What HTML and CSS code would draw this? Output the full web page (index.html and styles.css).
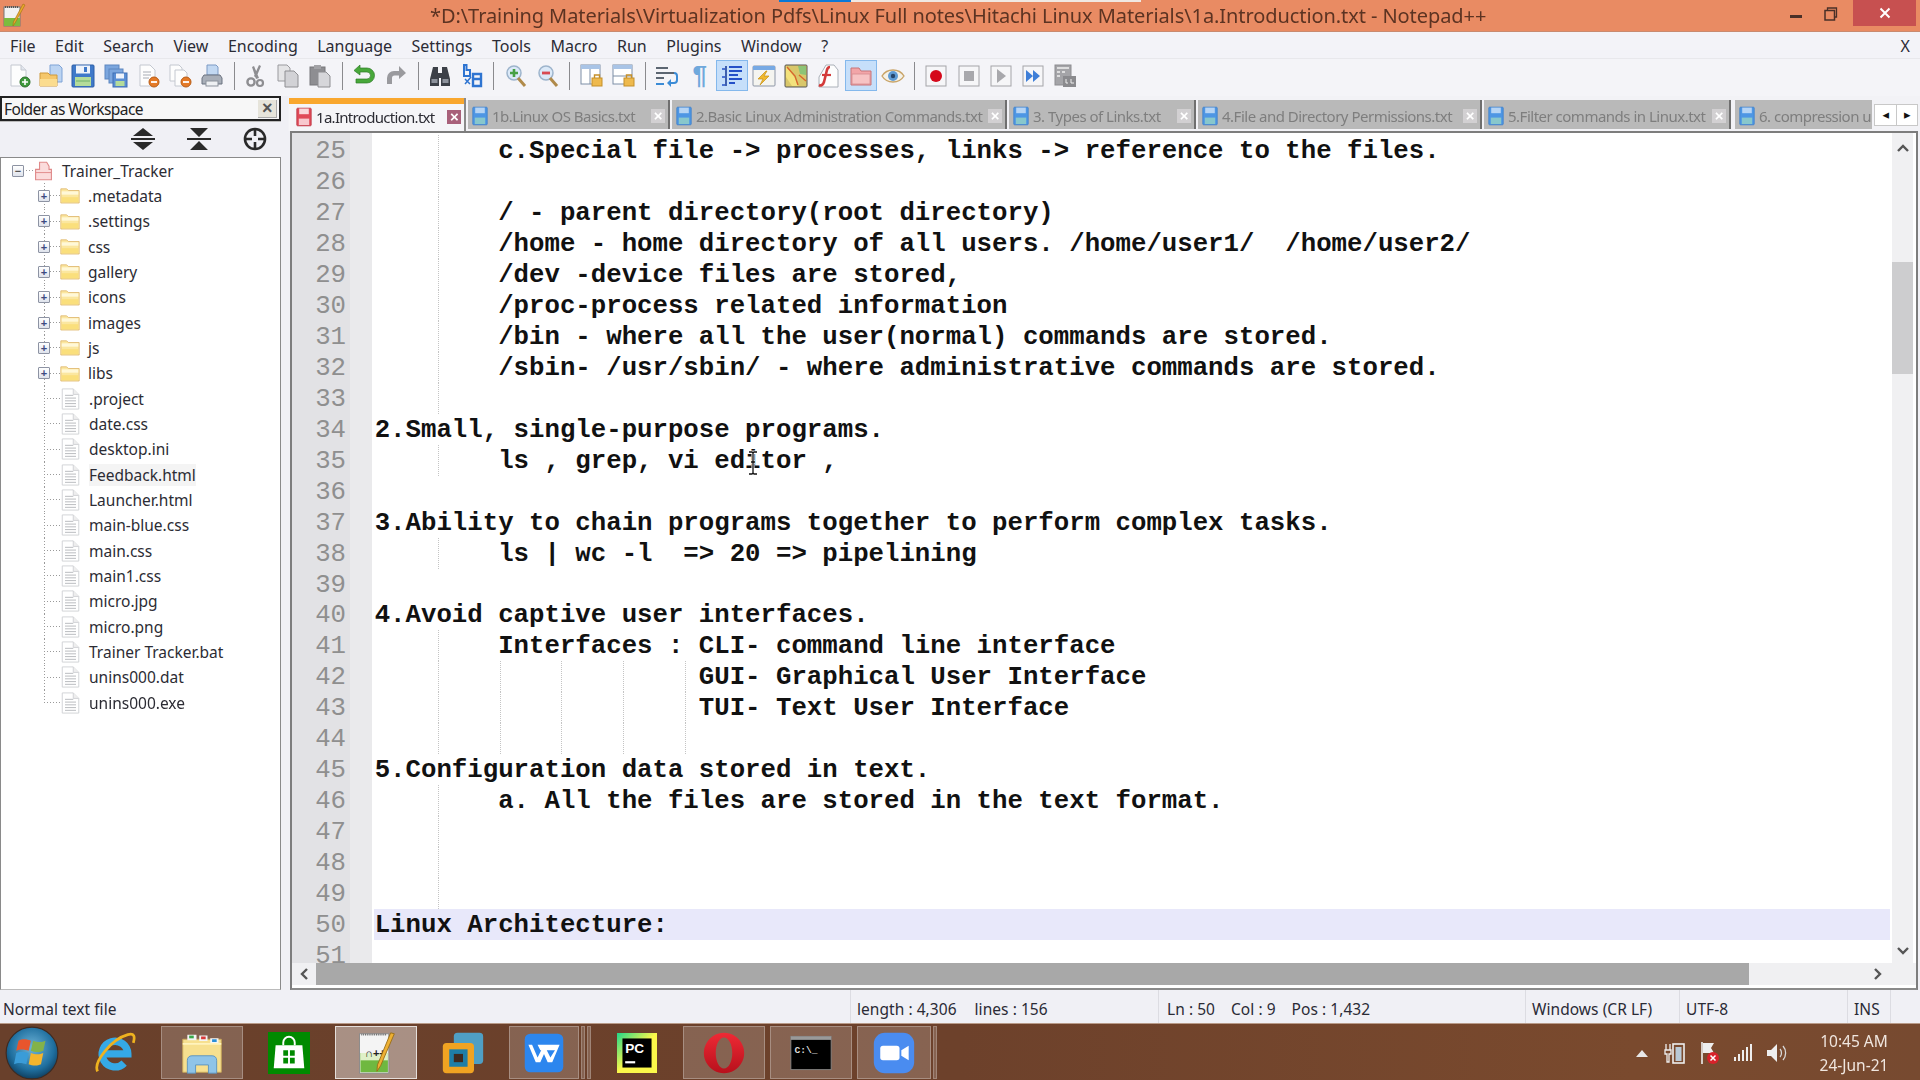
FILE: index.html
```html
<!DOCTYPE html>
<html lang="en">
<head>
<meta charset="UTF-8">
<title>Notepad++</title>
<link rel="stylesheet" href="styles.css">
</head>
<body>
<svg class="sprite" width="0" height="0">
  <!-- toolbar -->
  <symbol id="i-new" viewBox="0 0 24 24"><path d="M4 1h10l5 5v16H4z" fill="#fdfdfd" stroke="#c4c8d0"/><path d="M14 1v5h5" fill="#e2e6ee" stroke="#c4c8d0"/><circle cx="18" cy="18" r="5" fill="#3f9a3c" stroke="#2c6e2a"/><path d="M15 18h6M18 15v6" stroke="#fff" stroke-width="1.6"/></symbol>
  <symbol id="i-open" viewBox="0 0 24 24"><path d="M11 1h9l3 3v14H11z" fill="#bcd4f2" stroke="#7fa3d6"/><path d="M1 9h8l2 2h7v11H1z" fill="#f5c76b" stroke="#cf9a3c"/><path d="M1 15h17v7H1z" fill="#fbdc8f"/></symbol>
  <symbol id="i-save" viewBox="0 0 24 24"><rect x="1" y="1" width="22" height="22" rx="1" fill="#3f79c9" stroke="#2d5ea6"/><rect x="5" y="1.5" width="14" height="8" fill="#eef3fb"/><rect x="13" y="3" width="3" height="5" fill="#3f79c9"/><rect x="4" y="13" width="16" height="9" fill="#b4dc9a"/><path d="M5 17h14" stroke="#6fb06a"/></symbol>
  <symbol id="i-saveall" viewBox="0 0 24 24"><rect x="1" y="1" width="14" height="14" fill="#7ba6de" stroke="#5c86c0"/><rect x="5" y="5" width="14" height="14" fill="#7ba6de" stroke="#5c86c0"/><rect x="9" y="9" width="14" height="14" fill="#5a8ed4" stroke="#3f6fb3"/><rect x="12" y="9.5" width="8" height="5" fill="#eef3fb"/><rect x="11.5" y="17" width="9" height="5" fill="#b4dc9a"/></symbol>
  <symbol id="i-close" viewBox="0 0 24 24"><path d="M4 1h10l5 5v16H4z" fill="#fdfdfd" stroke="#c4c8d0"/><path d="M7 8h8M7 11h8M7 14h6" stroke="#a8acb4"/><circle cx="18" cy="18" r="5" fill="#e57a27" stroke="#b85c16"/><path d="M15 18h6" stroke="#fff" stroke-width="1.8"/></symbol>
  <symbol id="i-closeall" viewBox="0 0 24 24"><path d="M2 1h9l3 3v13H2z" fill="#fdfdfd" stroke="#c4c8d0"/><path d="M7 6h9l3 3v13H7z" fill="#fdfdfd" stroke="#c4c8d0"/><circle cx="18" cy="18" r="5" fill="#e57a27" stroke="#b85c16"/><path d="M15 18h6" stroke="#fff" stroke-width="1.8"/></symbol>
  <symbol id="i-print" viewBox="0 0 24 24"><path d="M7 1h9l2 2v8H7z" fill="#c2d8f2" stroke="#7c9ac4"/><path d="M4 11h16l2 3v6H2v-6z" fill="#a8aeb8" stroke="#6b7280"/><rect x="6" y="17" width="12" height="5" fill="#eef0f3" stroke="#8b919b"/></symbol>
  <symbol id="i-cut" viewBox="0 0 24 24"><path d="M15 1l2 1-5 12-2-2zM8 3l2-1 5 12-3 1z" fill="#8e8e92"/><circle cx="7" cy="18" r="3.6" fill="none" stroke="#8e8e92" stroke-width="2.4"/><circle cx="16" cy="19" r="3" fill="none" stroke="#8e8e92" stroke-width="2.2"/></symbol>
  <symbol id="i-copy" viewBox="0 0 24 24"><path d="M2 1h9l3 3v13H2z" fill="#e4e4e6" stroke="#9a9a9e"/><path d="M9 7h9l4 4v12H9z" fill="#d2d2d6" stroke="#8e8e92"/></symbol>
  <symbol id="i-paste" viewBox="0 0 24 24"><rect x="2" y="3" width="15" height="18" fill="#8e8e92" stroke="#77777b"/><rect x="6" y="1" width="7" height="4" fill="#a2a2a6"/><path d="M10 8h8l4 4v11H10z" fill="#d6d6da" stroke="#8e8e92"/></symbol>
  <symbol id="i-undo" viewBox="0 0 24 24"><path d="M8 4h7a7.5 7.5 0 0 1 0 15H4v-4h11a3.5 3.5 0 0 0 0-7H8v3L2 6.500 8 1z" fill="#48a83a" stroke="#2f7d2a" stroke-width=".7"/></symbol>
  <symbol id="i-redo" viewBox="0 0 24 24"><path d="M15 7H10a7 7 0 0 0-7 7v6h5v-6a2.500 2.500 0 0 1 2.500-2.500H15V15l7-6-7-7z" fill="#9a9a9e"/></symbol>
  <symbol id="i-find" viewBox="0 0 24 24"><path d="M5 3h5v6h4V3h5l3 12v7h-9v-8h-2v8H2v-7z" fill="#3c4048"/><rect x="3.500" y="15" width="6" height="4" fill="#8d929c"/><rect x="14.500" y="15" width="6" height="4" fill="#8d929c"/></symbol>
  <symbol id="i-replace" viewBox="0 0 24 24"><path d="M4 1h2.500v5H10v6H4z" fill="none" stroke="#2e74d1" stroke-width="2"/><path d="M13 10h8v5h-8zM13 15h8v7h-8z" fill="none" stroke="#2e74d1" stroke-width="2.400"/><path d="M5 15l5 5M11 13l-6 7" stroke="#2e74d1" stroke-width="1.500"/></symbol>
  <symbol id="i-zoomin" viewBox="0 0 24 24"><circle cx="10" cy="9" r="7" fill="#dbe9f8" stroke="#9db4cc" stroke-width="1.500"/><path d="M14 14l7 8" stroke="#b08a4a" stroke-width="3"/><path d="M6 9h8M10 5v8" stroke="#46a044" stroke-width="2.600"/></symbol>
  <symbol id="i-zoomout" viewBox="0 0 24 24"><circle cx="10" cy="9" r="7" fill="#dbe9f8" stroke="#9db4cc" stroke-width="1.500"/><path d="M14 14l7 8" stroke="#b08a4a" stroke-width="3"/><path d="M6 9h8" stroke="#d84a52" stroke-width="2.800"/></symbol>
  <symbol id="i-syncv" viewBox="0 0 24 24"><rect x="1" y="1" width="19" height="19" fill="#fff" stroke="#7c8ea6"/><path d="M1 1h19v4H1z" fill="#a9c4e6"/><path d="M10 5v15" stroke="#7c8ea6"/><rect x="12" y="14" width="10" height="8" fill="#eeb94d" stroke="#c48f2a"/><path d="M14.500 14v-3h5v3" fill="none" stroke="#c48f2a" stroke-width="1.400"/></symbol>
  <symbol id="i-synch" viewBox="0 0 24 24"><rect x="1" y="1" width="19" height="19" fill="#fff" stroke="#7c8ea6"/><path d="M1 1h19v4H1z" fill="#a9c4e6"/><path d="M1 12h19" stroke="#7c8ea6"/><rect x="12" y="14" width="10" height="8" fill="#eeb94d" stroke="#c48f2a"/><path d="M14.500 14v-3h5v3" fill="none" stroke="#c48f2a" stroke-width="1.400"/></symbol>
  <symbol id="i-wrap" viewBox="0 0 24 24"><path d="M1 4h12M1 9h18M1 14h8M1 20h8" stroke="#5c6672" stroke-width="2"/><path d="M19 9a3 3 0 0 1 3 3v4a3 3 0 0 1-3 3h-5" fill="none" stroke="#3b8bd6" stroke-width="2"/><path d="M16 15l-4 4 4 4z" fill="#3b8bd6"/><path d="M1 20h8" stroke="#3b8bd6" stroke-width="2"/></symbol>
  <symbol id="i-guide" viewBox="0 0 24 24"><path d="M6 2v20" stroke="#1d3f9c" stroke-width="1.600"/><path d="M9 3h13M9 7h13M9 11h9M9 15h13M9 19h6" stroke="#2450c8" stroke-width="2"/><path d="M2 5h3M2 13h3M2 21h3" stroke="#2450c8" stroke-width="1.500"/></symbol>
  <symbol id="i-udl" viewBox="0 0 24 24"><rect x="1" y="2" width="22" height="20" rx="1" fill="#f4f4f0" stroke="#8d96a6"/><path d="M1 2h22v4H1z" fill="#77a9e4"/><path d="M14 7L6 15h5l-3 6 9-9h-5l3-5z" fill="#f0b92e" stroke="#c68f13" stroke-width=".7"/></symbol>
  <symbol id="i-map" viewBox="0 0 24 24"><rect x="1" y="1" width="22" height="22" rx="1" fill="#d9c76a" stroke="#555"/><path d="M2 2l9 12 3 8h-6L2 13z" fill="#f3e27c"/><path d="M14 2h8v9l-6-1z" fill="#8dc476"/><path d="M3 3l8 9 3 9M15 11l7 6" stroke="#d8662c" stroke-width="1.400" fill="none"/></symbol>
  <symbol id="i-func" viewBox="0 0 24 24"><path d="M10 1h8l4 5v17H3V13z" fill="#fdfdfd" stroke="#aab0b8"/><path d="M14 3c-3 0-3 3-4 7l-2 8c-1 3-3 4-5 3" fill="none" stroke="#d33a3a" stroke-width="2.600"/><path d="M6 11h9" stroke="#d33a3a" stroke-width="2.200"/></symbol>
  <symbol id="i-folder" viewBox="0 0 24 24"><path d="M2 4h8l2 3h10v14H2z" fill="#f2a5a8" stroke="#c77478"/><path d="M3 10h18v10H3z" fill="#f7c3c4" stroke="#d58c8f" stroke-width=".8"/></symbol>
  <symbol id="i-eye" viewBox="0 0 24 24"><path d="M1 12c5-8 17-8 22 0-5 8-17 8-22 0z" fill="#f4f1e8" stroke="#c9a468" stroke-width="1.400"/><circle cx="12" cy="12" r="5" fill="#5f9bd4"/><circle cx="12" cy="12" r="2.200" fill="#25456b"/></symbol>
  <symbol id="i-rec" viewBox="0 0 24 24"><rect x="2" y="2" width="20" height="20" fill="#f6f6f8" stroke="#a4a4a8"/><circle cx="12" cy="12" r="6" fill="#d5091b"/></symbol>
  <symbol id="i-stop" viewBox="0 0 24 24"><rect x="2" y="2" width="20" height="20" fill="#f6f6f8" stroke="#a4a4a8"/><rect x="7" y="7" width="10" height="10" fill="#a8a8ac"/></symbol>
  <symbol id="i-play" viewBox="0 0 24 24"><rect x="2" y="2" width="20" height="20" fill="#f6f6f8" stroke="#a4a4a8"/><path d="M8 5l9 7-9 7z" fill="#a8a8ac"/></symbol>
  <symbol id="i-ff" viewBox="0 0 24 24"><rect x="2" y="2" width="20" height="20" fill="#f6f6f8" stroke="#a4a4a8"/><path d="M5 6l7 6-7 6zM12 6l7 6-7 6z" fill="#3f7fd8"/></symbol>
  <symbol id="i-savemacro" viewBox="0 0 24 24"><rect x="2" y="1" width="16" height="20" fill="#a4a4a8" stroke="#8c8c90"/><path d="M4 4h12M4 8h3M9 8h3M4 12h3" stroke="#f0f0f0" stroke-width="1.500"/><rect x="10" y="12" width="13" height="11" fill="#8a8a8e"/><path d="M13 15v4h2M18 15v4h3" stroke="#eee" fill="none"/></symbol>
  <!-- tabs -->
  <symbol id="i-tabred" viewBox="0 0 20 24"><rect x="1" y="1" width="18" height="22" rx="1" fill="#e04a58" stroke="#bb3644"/><rect x="4" y="1.500" width="12" height="7" fill="#f9d8dc"/><rect x="3.500" y="14" width="13" height="8" fill="#f8c8ce"/></symbol>
  <symbol id="i-tabblue" viewBox="0 0 20 24"><rect x="1" y="1" width="18" height="22" rx="1" fill="#4e96e4" stroke="#3b7fcb"/><rect x="4" y="1.500" width="12" height="7" fill="#b6d4f4"/><rect x="3.500" y="14" width="13" height="8" fill="#88c7cc"/></symbol>
  <!-- tree -->
  <symbol id="i-treefolder" viewBox="0 0 24 20"><path d="M1 2h7l2 2h13v15H1z" fill="#fbe7a0" stroke="#dfb76c"/><path d="M2 5h20v4H2z" fill="#fff8d8"/><path d="M2 12h20v6H2z" fill="#fadf7c"/></symbol>
  <symbol id="i-treefile" viewBox="0 0 20 24"><path d="M1 1h12l6 6v16H1z" fill="#fff" stroke="#cfd1d4"/><path d="M13 1v6h6" fill="#eee" stroke="#cfd1d4"/><path d="M4 8h9M4 11h12M4 14h12M4 17h12M4 20h12" stroke="#b4b6ba"/></symbol>
  <symbol id="i-treeroot" viewBox="0 0 24 24"><path d="M7 1h9l3 5v4h3v13H2V10h5z" fill="#fbdcdc" stroke="#e08a8a" stroke-width="1.400"/><path d="M2 14h20" stroke="#e08a8a" stroke-width="1.200"/></symbol>
</svg>

<header class="titlebar">
  <div class="progress"><span class="progress-done"></span></div>
  <svg class="app-icon" viewBox="0 0 24 24"><rect x="2" y="3" width="16" height="19" fill="#f2f2f2" stroke="#777"/><path d="M2 14h16v8H2z" fill="#7cbb3e"/><path d="M3 3h14" stroke="#555" stroke-width="2" stroke-dasharray="1 1"/><path d="M23 1L13 19l-2 3 .4-4L21 0z" fill="#e8a92c" stroke="#a06e12" stroke-width=".6"/></svg>
  <div class="title-text">*D:\Training Materials\Virtualization Pdfs\Linux Full notes\Hitachi Linux Materials\1a.Introduction.txt - Notepad++</div>
  <div class="win-btns">
    <span class="win-min"></span>
    <svg class="win-restore" viewBox="0 0 14 14"><path d="M3.500 3V1h9v9h-2" fill="none" stroke="#4a3028" stroke-width="1.300"/><rect x="1" y="3.500" width="9.500" height="9.500" fill="none" stroke="#4a3028" stroke-width="1.500"/></svg>
    <div class="win-close"><svg viewBox="0 0 12 12"><path d="M1.500 1.500l9 9M10.500 1.500l-9 9" stroke="#fff" stroke-width="2"/></svg></div>
  </div>
</header>

<nav class="menubar">
  <span>File</span><span>Edit</span><span>Search</span><span>View</span><span>Encoding</span><span>Language</span><span>Settings</span><span>Tools</span><span>Macro</span><span>Run</span><span>Plugins</span><span>Window</span><span>?</span>
  <span class="menu-x">X</span>
</nav>

<div class="toolbar">
  <div class="tb"><svg><use href="#i-new"/></svg></div>
  <div class="tb"><svg><use href="#i-open"/></svg></div>
  <div class="tb"><svg><use href="#i-save"/></svg></div>
  <div class="tb"><svg><use href="#i-saveall"/></svg></div>
  <div class="tb"><svg><use href="#i-close"/></svg></div>
  <div class="tb"><svg><use href="#i-closeall"/></svg></div>
  <div class="tb"><svg><use href="#i-print"/></svg></div>
  <i class="tb-sep"></i>
  <div class="tb"><svg><use href="#i-cut"/></svg></div>
  <div class="tb"><svg><use href="#i-copy"/></svg></div>
  <div class="tb"><svg><use href="#i-paste"/></svg></div>
  <i class="tb-sep"></i>
  <div class="tb"><svg><use href="#i-undo"/></svg></div>
  <div class="tb"><svg><use href="#i-redo"/></svg></div>
  <i class="tb-sep"></i>
  <div class="tb"><svg><use href="#i-find"/></svg></div>
  <div class="tb"><svg><use href="#i-replace"/></svg></div>
  <i class="tb-sep"></i>
  <div class="tb"><svg><use href="#i-zoomin"/></svg></div>
  <div class="tb"><svg><use href="#i-zoomout"/></svg></div>
  <i class="tb-sep"></i>
  <div class="tb"><svg><use href="#i-syncv"/></svg></div>
  <div class="tb"><svg><use href="#i-synch"/></svg></div>
  <i class="tb-sep"></i>
  <div class="tb"><svg><use href="#i-wrap"/></svg></div>
  <div class="tb tb-pilcrow">¶</div>
  <div class="tb tb-on"><svg><use href="#i-guide"/></svg></div>
  <div class="tb"><svg><use href="#i-udl"/></svg></div>
  <div class="tb"><svg><use href="#i-map"/></svg></div>
  <div class="tb"><svg><use href="#i-func"/></svg></div>
  <div class="tb tb-on"><svg><use href="#i-folder"/></svg></div>
  <div class="tb"><svg><use href="#i-eye"/></svg></div>
  <i class="tb-sep"></i>
  <div class="tb"><svg><use href="#i-rec"/></svg></div>
  <div class="tb"><svg><use href="#i-stop"/></svg></div>
  <div class="tb"><svg><use href="#i-play"/></svg></div>
  <div class="tb"><svg><use href="#i-ff"/></svg></div>
  <div class="tb"><svg><use href="#i-savemacro"/></svg></div>
</div>

<div class="workarea">
  <aside class="panel">
    <div class="panel-head">
      <span>Folder as Workspace</span>
      <span class="panel-x">×</span>
    </div>
    <div class="panel-tools">
      <svg viewBox="0 0 24 24"><path d="M12 1l10 8H2zM12 23L2 15h20z" fill="#2a2a2a"/><path d="M0 12h24" stroke="#2a2a2a" stroke-width="2"/></svg>
      <svg viewBox="0 0 24 24"><path d="M3 1h18L12 10zM12 14l9 9H3z" fill="#2a2a2a"/><path d="M0 12h24" stroke="#2a2a2a" stroke-width="2"/></svg>
      <svg viewBox="0 0 24 24"><circle cx="12" cy="12" r="10" fill="none" stroke="#2a2a2a" stroke-width="2.600"/><path d="M12 2v7M12 15v7M2 12h7M15 12h7" stroke="#2a2a2a" stroke-width="2.600"/></svg>
    </div>
    <ul class="tree">
      <li class="row root"><b class="exp">−</b><svg class="ic-root"><use href="#i-treeroot"/></svg>Trainer_Tracker</li>
      <li class="row dir"><b class="exp">+</b><svg class="ic-dir"><use href="#i-treefolder"/></svg>.metadata</li>
      <li class="row dir"><b class="exp">+</b><svg class="ic-dir"><use href="#i-treefolder"/></svg>.settings</li>
      <li class="row dir"><b class="exp">+</b><svg class="ic-dir"><use href="#i-treefolder"/></svg>css</li>
      <li class="row dir"><b class="exp">+</b><svg class="ic-dir"><use href="#i-treefolder"/></svg>gallery</li>
      <li class="row dir"><b class="exp">+</b><svg class="ic-dir"><use href="#i-treefolder"/></svg>icons</li>
      <li class="row dir"><b class="exp">+</b><svg class="ic-dir"><use href="#i-treefolder"/></svg>images</li>
      <li class="row dir"><b class="exp">+</b><svg class="ic-dir"><use href="#i-treefolder"/></svg>js</li>
      <li class="row dir"><b class="exp">+</b><svg class="ic-dir"><use href="#i-treefolder"/></svg>libs</li>
      <li class="row file"><svg class="ic-file"><use href="#i-treefile"/></svg>.project</li>
      <li class="row file"><svg class="ic-file"><use href="#i-treefile"/></svg>date.css</li>
      <li class="row file"><svg class="ic-file"><use href="#i-treefile"/></svg>desktop.ini</li>
      <li class="row file"><svg class="ic-file"><use href="#i-treefile"/></svg><span class="hover">Feedback.html</span></li>
      <li class="row file"><svg class="ic-file"><use href="#i-treefile"/></svg>Launcher.html</li>
      <li class="row file"><svg class="ic-file"><use href="#i-treefile"/></svg>main-blue.css</li>
      <li class="row file"><svg class="ic-file"><use href="#i-treefile"/></svg>main.css</li>
      <li class="row file"><svg class="ic-file"><use href="#i-treefile"/></svg>main1.css</li>
      <li class="row file"><svg class="ic-file"><use href="#i-treefile"/></svg>micro.jpg</li>
      <li class="row file"><svg class="ic-file"><use href="#i-treefile"/></svg>micro.png</li>
      <li class="row file"><svg class="ic-file"><use href="#i-treefile"/></svg>Trainer Tracker.bat</li>
      <li class="row file"><svg class="ic-file"><use href="#i-treefile"/></svg>unins000.dat</li>
      <li class="row file last"><svg class="ic-file"><use href="#i-treefile"/></svg>unins000.exe</li>
    </ul>
  </aside>

  <main class="docs">
    <div class="tabbar">
      <div class="tab tab-on t1"><svg><use href="#i-tabred"/></svg><span class="tab-name">1a.Introduction.txt</span><b class="tab-x">×</b></div>
      <div class="tab t2"><svg><use href="#i-tabblue"/></svg><span class="tab-name">1b.Linux OS Basics.txt</span><b class="tab-x">×</b></div>
      <div class="tab t3"><svg><use href="#i-tabblue"/></svg><span class="tab-name">2.Basic Linux Administration Commands.txt</span><b class="tab-x">×</b></div>
      <div class="tab t4"><svg><use href="#i-tabblue"/></svg><span class="tab-name">3. Types of Links.txt</span><b class="tab-x">×</b></div>
      <div class="tab t5"><svg><use href="#i-tabblue"/></svg><span class="tab-name">4.File and Directory Permissions.txt</span><b class="tab-x">×</b></div>
      <div class="tab t6"><svg><use href="#i-tabblue"/></svg><span class="tab-name">5.Filter commands in Linux.txt</span><b class="tab-x">×</b></div>
      <div class="tab t7"><svg><use href="#i-tabblue"/></svg><span class="tab-name">6. compression u</span></div>
      <div class="tab-arrows"><span>◂</span><span>▸</span></div>
    </div>

    <div class="editor">
      <div class="editor-main">
        <div class="view">
          <div class="ln"><span class="num">25</span><span class="txt g1">        c.Special file -&gt; processes, links -&gt; reference to the files.</span></div>
          <div class="ln"><span class="num">26</span><span class="txt g1"></span></div>
          <div class="ln"><span class="num">27</span><span class="txt g1">        / - parent directory(root directory)</span></div>
          <div class="ln"><span class="num">28</span><span class="txt g1">        /home - home directory of all users. /home/user1/  /home/user2/</span></div>
          <div class="ln"><span class="num">29</span><span class="txt g1">        /dev -device files are stored,</span></div>
          <div class="ln"><span class="num">30</span><span class="txt g1">        /proc-process related information</span></div>
          <div class="ln"><span class="num">31</span><span class="txt g1">        /bin - where all the user(normal) commands are stored.</span></div>
          <div class="ln"><span class="num">32</span><span class="txt g1">        /sbin- /usr/sbin/ - where administrative commands are stored.</span></div>
          <div class="ln"><span class="num">33</span><span class="txt g1"></span></div>
          <div class="ln"><span class="num">34</span><span class="txt">2.Small, single-purpose programs.</span></div>
          <div class="ln"><span class="num">35</span><span class="txt g1">        ls , grep, vi editor ,</span></div>
          <div class="ln"><span class="num">36</span><span class="txt"></span></div>
          <div class="ln"><span class="num">37</span><span class="txt">3.Ability to chain programs together to perform complex tasks.</span></div>
          <div class="ln"><span class="num">38</span><span class="txt g1">        ls | wc -l  =&gt; 20 =&gt; pipelining</span></div>
          <div class="ln"><span class="num">39</span><span class="txt"></span></div>
          <div class="ln"><span class="num">40</span><span class="txt">4.Avoid captive user interfaces.</span></div>
          <div class="ln"><span class="num">41</span><span class="txt g1">        Interfaces : CLI- command line interface</span></div>
          <div class="ln"><span class="num">42</span><span class="txt g5">                     GUI- Graphical User Interface</span></div>
          <div class="ln"><span class="num">43</span><span class="txt g5">                     TUI- Text User Interface</span></div>
          <div class="ln"><span class="num">44</span><span class="txt g5"></span></div>
          <div class="ln"><span class="num">45</span><span class="txt">5.Configuration data stored in text.</span></div>
          <div class="ln"><span class="num">46</span><span class="txt g1">        a. All the files are stored in the text format.</span></div>
          <div class="ln"><span class="num">47</span><span class="txt g1"></span></div>
          <div class="ln"><span class="num">48</span><span class="txt g1"></span></div>
          <div class="ln"><span class="num">49</span><span class="txt g1"></span></div>
          <div class="ln"><span class="num">50</span><span class="txt cur">Linux Architecture:</span></div>
          <div class="ln"><span class="num">51</span><span class="txt"></span></div>
          <svg class="ibeam" viewBox="0 0 12 24"><path d="M2 1h3l1 1 1-1h3M6 2v20M2 23h3l1-1 1 1h3M4 11h4" fill="none" stroke="#fff" stroke-width="3"/><path d="M2 1h3l1 1 1-1h3M6 2v20M2 23h3l1-1 1 1h3M4 11h4" fill="none" stroke="#111" stroke-width="1.300"/></svg>
        </div>
        <div class="vscroll">
          <svg viewBox="0 0 12 8"><path d="M1 7l5-5 5 5" fill="none" stroke="#555" stroke-width="2.400"/></svg>
          <div class="vthumb"></div>
          <svg viewBox="0 0 12 8"><path d="M1 1l5 5 5-5" fill="none" stroke="#555" stroke-width="2.400"/></svg>
        </div>
      </div>
      <div class="hscroll">
        <svg viewBox="0 0 8 12"><path d="M7 1L2 6l5 5" fill="none" stroke="#555" stroke-width="2.400"/></svg>
        <div class="hthumb"></div>
        <svg viewBox="0 0 8 12"><path d="M1 1l5 5-5 5" fill="none" stroke="#555" stroke-width="2.400"/></svg>
      </div>
    </div>
  </main>
</div>

<footer class="statusbar">
  <div class="st">Normal text file</div>
  <div class="st st-len"><span>length : 4,306</span><span>lines : 156</span></div>
  <div class="st st-pos"><span>Ln : 50</span><span>Col : 9</span><span>Pos : 1,432</span></div>
  <div class="st">Windows (CR LF)</div>
  <div class="st">UTF-8</div>
  <div class="st">INS</div>
</footer>

<div class="taskbar">
  <div class="task orb">
    <svg viewBox="0 0 48 48"><defs><radialGradient id="orbg" cx=".5" cy=".4" r=".65"><stop offset="0" stop-color="#6fb4d8"/><stop offset=".65" stop-color="#1f6f9f"/><stop offset="1" stop-color="#0b3350"/></radialGradient></defs><circle cx="24" cy="24" r="23" fill="url(#orbg)" stroke="#3d2a22"/><path d="M12 13c4-2 8-1 11 0l-2 9c-3-1-7-2-11 0z" fill="#e8552d"/><path d="M25 13c3 1 7 2 11 0l-2 9c-4 2-8 1-11 0z" fill="#83b24a"/><path d="M10 24c4-2 8-1 11 0l-2 10c-3-1-7-2-11 0z" fill="#3a9cd8"/><path d="M23 24c3 1 7 2 11 0l-2 10c-4 2-8 1-11 0z" fill="#f4b52d"/></svg>
  </div>
  <div class="task">
    <svg viewBox="0 0 48 48"><path d="M10 25h28A14 14 0 1 0 34 35" fill="none" stroke="#35a9e6" stroke-width="8"/><path d="M5 44C0 34 20 9 38 4c7-2 8 2 6 9" fill="none" stroke="#eeb21f" stroke-width="3"/></svg>
  </div>
  <div class="task cell">
    <svg viewBox="0 0 48 48"><path d="M3 9h42v36H3z" fill="#f7e08f" stroke="#c9a85a"/><path d="M8 4h10v6H8zM21 5h9v6h-9zM33 8h9v6h-9z" fill="#f4f4f4"/><path d="M10 5h5v3h-5z" fill="#3aa84a"/><path d="M23 6h5v3h-5z" fill="#d83a3a"/><path d="M35 9h5v3h-5z" fill="#2a8fd8"/><path d="M3 14h42" stroke="#fff3bd" stroke-width="2"/><path d="M8 46V32c0-3 2-5 5-5h22c3 0 5 2 5 5v14h-9v-9H17v9z" fill="#8fc4e8" stroke="#5b93bd"/></svg>
  </div>
  <div class="task">
    <svg class="ic-store" viewBox="0 0 44 44"><rect width="44" height="44" fill="#008a00"/><path d="M8 14h28l2 24H6z" fill="#fff"/><path d="M16 14v-3a6 6 0 0 1 12 0v3" fill="none" stroke="#fff" stroke-width="2"/><path d="M16 19h5v6h-5zM23 19h5v6h-5zM16 27h5v6h-5zM23 27h5v6h-5z" fill="#008a00"/></svg>
  </div>
  <div class="task cell cell-on">
    <svg viewBox="0 0 48 48"><rect x="6" y="3" width="32" height="43" fill="#f4f4f4" stroke="#888"/><path d="M7 24h30v21H7z" fill="#6fb840"/><path d="M7 24h30v8H7z" fill="#dff0c8"/><path d="M8 4h28" stroke="#666" stroke-width="2" stroke-dasharray="1 1"/><text class="npp-t" x="12" y="28">∩++</text><path d="M44 3L29 38l-4 6 .6-7L40 2z" fill="#eeb033" stroke="#9a6e16"/></svg>
  </div>
  <div class="task">
    <svg viewBox="0 0 48 48"><rect x="14" y="2" width="32" height="34" rx="4" fill="#4f9fc4"/><rect x="2" y="13" width="34" height="33" rx="4" fill="#f0a322"/><rect x="9" y="20" width="20" height="19" fill="#1e7ea8"/><rect x="14" y="25" width="10" height="9" fill="#3f2a20"/></svg>
  </div>
  <div class="task cell cell-bars">
    <div class="cell-main"><svg viewBox="0 0 48 48"><rect x="3" y="3" width="42" height="42" rx="6" fill="#2c86ee"/><path d="M7 15l8 19h5l4-9 4 9h5l8-19H17l3 6h16l-5 8-7-14-7 14-6-14z" fill="#fff"/></svg></div>
    <i></i><i></i>
  </div>
  <div class="task">
    <svg class="ic-pc" viewBox="0 0 44 44"><defs><linearGradient id="pcg" x1="0" y1="0" x2="1" y2="1"><stop offset="0" stop-color="#21d789"/><stop offset=".5" stop-color="#fcf84a"/></linearGradient></defs><rect width="44" height="44" fill="url(#pcg)"/><rect x="6" y="6" width="32" height="32" fill="#000"/><text class="pc-t" x="9" y="22">PC</text><rect x="9" y="31" width="11" height="2.400" fill="#fff"/></svg>
  </div>
  <div class="task cell">
    <svg viewBox="0 0 48 48"><defs><linearGradient id="opg" x1="0" y1="0" x2="0" y2="1"><stop offset="0" stop-color="#ee2a35"/><stop offset="1" stop-color="#b8101c"/></linearGradient></defs><path fill-rule="evenodd" d="M24 2a22 22 0 1 0 .01 0zM24 7c-5 0-9 7.500-9 17s4 17 9 17 9-7.500 9-17-4-17-9-17z" fill="url(#opg)"/></svg>
  </div>
  <div class="task cell">
    <svg class="ic-cmd" viewBox="0 0 48 40"><rect x="1" y="1" width="46" height="38" fill="#000" stroke="#888"/><rect x="1" y="1" width="46" height="4" fill="#9a9a9a"/><text class="cmd-t" x="5" y="20">C:\_</text></svg>
  </div>
  <div class="task cell cell-bars zoom-cell">
    <div class="cell-main"><svg viewBox="0 0 48 48"><rect x="2" y="2" width="44" height="44" rx="12" fill="#4a8cf0"/><rect x="9" y="16" width="21" height="16" rx="3" fill="#fff"/><path d="M32 21l8-5v16l-8-5z" fill="#fff"/></svg></div>
    <i></i>
  </div>
  <div class="tray">
    <svg viewBox="0 0 24 24"><path d="M12 9l6 7H6z" fill="#e8e8e8"/></svg>
    <svg viewBox="0 0 24 24"><path d="M3 3v6M7 3v6M2 9h6v4H6v8H4v-8H2z" fill="none" stroke="#eee" stroke-width="1.300"/><rect x="10" y="3" width="11" height="19" fill="none" stroke="#eee" stroke-width="1.600"/><rect x="12.500" y="6" width="6" height="14" fill="#b9c9d6"/></svg>
    <svg viewBox="0 0 24 24"><path d="M5 1v22" stroke="#eee" stroke-width="1.600"/><path d="M6 2h11l-3 5 3 5H6z" fill="#eee"/><circle cx="16" cy="17" r="6" fill="#d8222a"/><path d="M13.500 14.500l5 5M18.500 14.500l-5 5" stroke="#fff" stroke-width="1.500"/></svg>
    <svg viewBox="0 0 24 24"><path d="M3 20h2v-4H3zM7 20h2V13H7zM11 20h2V9h-2zM15 20h2V6h-2zM19 20h2V3h-2z" fill="#eee"/></svg>
    <svg viewBox="0 0 24 24"><path d="M3 9h4l6-6v18l-6-6H3z" fill="#eee"/><path d="M16 8c2 2 2 6 0 8M19 5c3.500 4 3.500 10 0 14" fill="none" stroke="#d8d8d8" stroke-width="1.300"/></svg>
    <div class="clock"><span>10:45 AM</span><span>24-Jun-21</span></div>
  </div>
</div>
</body>
</html>
```

FILE: styles.css
```css
* {
    box-sizing: border-box;
}
html, body {
    margin: 0;
    padding: 0;
}
body {
    width: 1920px;
    height: 1080px;
    overflow: hidden;
    display: flex;
    flex-direction: column;
    font-family: "Noto Sans", "Liberation Sans", sans-serif;
    font-size: 16px;
    color: #222;
    background: #f0f0f5;
    filter: blur(0.45px);
}
.sprite {
    position: absolute;
}

/* title bar */
.titlebar {
    position: relative;
    height: 32px;
    flex: none;
    display: flex;
    align-items: center;
    background: #e98b63;
    border-bottom: 1px solid #c98a70;
}
.progress {
    position: absolute;
    top: 0;
    left: 779px;
    width: 362px;
    height: 2px;
    background: #f0e8e2;
}
.progress-done {
    display: block;
    width: 72px;
    height: 2px;
    background: #0a78d7;
}
.app-icon {
    width: 24px;
    height: 26px;
    margin-left: 2px;
}
.title-text {
    position: absolute;
    left: 430px;
    top: 3px;
    font-size: 20px;
    line-height: 26px;
    white-space: nowrap;
    color: #5c3322;
    letter-spacing: -0.08px;
}
.win-btns {
    margin-left: auto;
    display: flex;
    align-self: flex-start;
    align-items: flex-start;
}
.win-min {
    width: 12px;
    height: 3px;
    margin: 15px 22px 0 0;
    background: #4a3028;
}
.win-restore {
    width: 14px;
    height: 14px;
    margin: 7px 15px 0 0;
}
.win-close {
    width: 63px;
    height: 26px;
    margin-right: 4px;
    background: #c75050;
    display: flex;
    align-items: center;
    justify-content: center;
}
.win-close svg {
    width: 12px;
    height: 12px;
}

/* menu */
.menubar {
    height: 27px;
    flex: none;
    display: flex;
    align-items: center;
    gap: 19.5px;
    padding: 1px 0 0 10px;
    background: #f3f3f8;
    border-bottom: 1px solid #e8e8ec;
    font-size: 16px;
    color: #2b2b35;
}
.menu-x {
    margin-left: auto;
    margin-right: 10px;
}

/* toolbar */
.toolbar {
    height: 37px;
    flex: none;
    display: flex;
    align-items: flex-start;
    padding: 1px 0 0 3px;
    background: #f4f4f8;
}
.tb {
    width: 32.2px;
    height: 31px;
    display: flex;
    align-items: center;
    justify-content: center;
    border: 1px solid transparent;
}
.tb svg {
    width: 24px;
    height: 24px;
}
.tb-on {
    background: #c6dffa;
    border-color: #84b8ec;
}
.tb-pilcrow {
    font-family: "Liberation Sans", sans-serif;
    font-size: 26px;
    font-weight: bold;
    color: #6fa8dc;
}
.tb-sep {
    width: 11.5px;
    height: 28px;
    margin-top: 2px;
    background: linear-gradient(#8a8a8e, #8a8a8e) center / 1px 100% no-repeat;
}

/* main area */
.workarea {
    flex: 1;
    min-height: 0;
    display: flex;
}
.panel {
    width: 288px;
    flex: none;
    display: flex;
    flex-direction: column;
    background: #f0f0f5;
}
.panel-head {
    width: 281px;
    height: 25px;
    flex: none;
    display: flex;
    align-items: center;
    justify-content: space-between;
    padding: 0 2px;
    border: 2px solid #222;
    font-size: 15.500px;
    background: #f7f7f7;
    letter-spacing: -0.6px;
}
.panel-x {
    width: 19px;
    height: 18px;
    background: #e6e4da;
    border-right: 1px solid #aaa;
    border-bottom: 1px solid #aaa;
    font: bold 18px/17px "Liberation Sans", sans-serif;
    text-align: center;
    color: #555;
}
.panel-tools {
    width: 281px;
    height: 36px;
    flex: none;
    display: grid;
    grid-template-columns: 28px 28px 28px;
    column-gap: 28px;
    padding: 5px 0 0 129px;
    border-top: 1px solid #bbb;
}
.panel-tools svg {
    width: 28px;
    height: 24px;
}
.tree {
    flex: 1;
    width: 281px;
    margin: 0;
    padding: 0;
    list-style: none;
    background: #fff;
    border: 1px solid #8a8a8a;
    border-bottom-color: #bbb;
    font-size: 15.500px;
    color: #2c2c34;
}
.row {
    height: 25.33px;
    display: flex;
    align-items: center;
    white-space: nowrap;
    background-repeat: no-repeat;
    background-image:
        repeating-linear-gradient(to bottom, #9a9a9a 0 1px, transparent 1px 3px),
        repeating-linear-gradient(to right, #9a9a9a 0 1px, transparent 1px 3px);
    background-size: 1px 100%, 16px 1px;
    background-position: 43px 0, 43px 50%;
}
.root {
    padding-left: 11px;
    background-image: repeating-linear-gradient(to right, #9a9a9a 0 1px, transparent 1px 3px);
    background-size: 12px 1px;
    background-position: 22px 50%;
}
.dir {
    padding-left: 37px;
}
.file {
    padding-left: 60px;
}
.last {
    background-size: 1px 50%, 16px 1px;
}
.exp {
    width: 12px;
    height: 12px;
    border: 1px solid #8d93a3;
    border-radius: 1px;
    background: linear-gradient(#fff, #dfe3ec);
    font: bold 11px/10px "Liberation Sans", sans-serif;
    text-align: center;
    color: #3c4a80;
    margin-right: 10px;
    flex: none;
}
.root .exp {
    color: #555;
}
.ic-root {
    width: 19px;
    height: 20px;
    margin-right: 9px;
}
.ic-dir {
    width: 20px;
    height: 17px;
    margin-right: 8px;
}
.ic-file {
    width: 19px;
    height: 22px;
    margin-right: 9px;
}
.hover {
    background: #f4f4f4;
}

/* tabs */
.docs {
    flex: 1;
    min-width: 0;
    display: flex;
    flex-direction: column;
}
.tabbar {
    height: 35px;
    flex: none;
    display: flex;
    padding: 2px 0 2px 1px;
    font-size: 15px;
    letter-spacing: -0.5px;
    color: #7e7e7e;
    background: #f2f2f6;
}
.tab {
    height: 29px;
    margin: 2px 2px 0 0;
    display: flex;
    align-items: center;
    flex: none;
    padding: 2px 3px 0 4px;
    background: #b9b9b9;
    border-right: 2px solid #6f6f6f;
    white-space: nowrap;
    overflow: hidden;
}
.tab svg {
    width: 16px;
    height: 20px;
    flex: none;
    margin-right: 4px;
}
.tab-name {
    flex: 1;
}
.tab-x {
    width: 14px;
    height: 14px;
    flex: none;
    background: #d2d0d2;
    color: #fff;
    font: bold 15px/14px "Liberation Sans", sans-serif;
    text-align: center;
}
.tab-on {
    height: 33px;
    margin-top: 0;
    padding: 4px 3px 0 7px;
    background: #f5f5f8 linear-gradient(#f9a72e, #f9a72e) top / 100% 6px no-repeat;
    color: #2c2c34;
    letter-spacing: -0.7px;
    border-right-color: #8a8a8a;
}
.tab-on .tab-x {
    background: #a8607a;
}
.t1 { width: 177px; }
.t2 { width: 202px; }
.t3 { width: 335px; }
.t4 { width: 187px; }
.t5 { width: 284px; }
.t6 {
    width: 247px;
    margin-right: 4px;
}
.t7 {
    width: 137px;
    border-right: none;
}
.tab-arrows {
    display: flex;
    height: 22px;
    margin-top: 6px;
    border: 1px solid #c8c8c8;
    color: #111;
}
.tab-arrows span {
    width: 21px;
    font: 13px/19px "DejaVu Sans", sans-serif;
    text-align: center;
    background: #fff;
}
.tab-arrows span + span {
    border-left: 1px solid #c8c8c8;
}

/* editor */
.editor {
    flex: 1;
    min-height: 0;
    margin: 0 2px 0 2px;
    display: flex;
    flex-direction: column;
    background: #fff;
    border: 2px solid #7d7d7d;
    border-color: #7d7d7d #7d7d7d #8a8a8a #7d7d7d;
}
.editor-main {
    height: 830px;
    display: flex;
}
.view {
    position: relative;
    flex: 1;
    min-width: 0;
    overflow: hidden;
    padding-top: 2.4px;
    background: linear-gradient(90deg, #e2e2e5 58px, #eaeaec 58px, #eaeaec 80px, #fff 80px);
}
.ln {
    display: flex;
    height: 30.95px;
    font-family: "Liberation Mono", monospace;
    font-size: 25.72px;
    line-height: 33.5px;
    white-space: pre;
}
.num {
    width: 80px;
    flex: none;
    padding-right: 26px;
    text-align: right;
    color: #8f8f8f;
    background: linear-gradient(90deg, #e2e2e5 58px, #eaeaec 58px);
}
.txt {
    flex: 1;
    margin-left: 2px;
    padding-left: 0.7px;
    margin-right: 2px;
    font-weight: bold;
    color: #111;
    background-color: #fff;
    background-repeat: no-repeat;
}
.cur {
    background-color: #e8e8fa;
}
.g1 {
    background-image: repeating-linear-gradient(to bottom, #c4c4c4 0 1px, transparent 1px 2px);
    background-size: 1px 100%;
    background-position: 64px 0;
}
.g5 {
    --dots: repeating-linear-gradient(to bottom, #c4c4c4 0 1px, transparent 1px 2px);
    background-image: var(--dots), var(--dots), var(--dots), var(--dots), var(--dots);
    background-size: 1px 100%;
    background-position: 64px 0, 126px 0, 187px 0, 249px 0, 311px 0;
}
.ibeam {
    position: absolute;
    left: 455px;
    top: 317px;
    width: 12px;
    height: 26px;
}
.vscroll {
    width: 21px;
    flex: none;
    margin-right: 3px;
    display: flex;
    flex-direction: column;
    align-items: center;
    padding: 11px 0 8px;
    background: #f0f0f2;
}
.vscroll svg {
    width: 12px;
    height: 8px;
    flex: none;
}
.vthumb {
    width: 100%;
    height: 112px;
    margin: 110px 0 auto;
    background: #cdcdcf;
}
.hscroll {
    height: 22px;
    display: flex;
    align-items: center;
    background: #f0f0f2;
    padding-left: 8px;
}
.hscroll svg {
    width: 8px;
    height: 12px;
    flex: none;
}
.hthumb {
    width: 1433px;
    height: 100%;
    margin: 0 125px 0 8px;
    background: #a8a8a8;
}

/* status bar */
.statusbar {
    height: 33px;
    flex: none;
    display: grid;
    grid-template-columns: 851px 308px 367px 154px 168px 43px;
    align-items: stretch;
    font-size: 15.500px;
    letter-spacing: 0.05px;
    color: #2b2b35;
    background: #f0f0f5;
}
.st {
    display: flex;
    align-items: center;
    padding-left: 6px;
    padding-top: 5px;
    border-right: 1px solid #dcdce2;
    white-space: nowrap;
}
.st:first-child {
    padding-left: 3px;
}
.st-len {
    gap: 18px;
}
.st-pos {
    gap: 16px;
    padding-left: 8px;
}

/* taskbar */
.taskbar {
    height: 57px;
    flex: none;
    display: flex;
    gap: 5px;
    padding-top: 2px;
    background: linear-gradient(90deg, #69402b 0, #6d412b 50%, #7a4a2e 85%, #774a30 100%);
    border-top: 1px solid #b89a88;
}
.task {
    width: 82px;
    height: 53px;
    flex: none;
    display: flex;
    align-items: center;
    justify-content: center;
    border: 1px solid transparent;
}
.task svg {
    width: 44px;
    height: 44px;
}
.orb {
    width: 69px;
    padding-right: 5px;
}
.orb svg {
    width: 54px;
    height: 54px;
}
.cell {
    background: rgba(255, 255, 255, 0.18);
    border-color: rgba(255, 255, 255, 0.28);
}
.cell-on {
    background: rgba(255, 255, 255, 0.42);
    border-color: rgba(255, 255, 255, 0.7);
}
.cell-bars {
    background: none;
    border: none;
    gap: 2px;
    justify-content: flex-start;
}
.cell-bars i {
    width: 4px;
    height: 53px;
    flex: none;
    background: rgba(255, 255, 255, 0.18);
    border: 1px solid rgba(255, 255, 255, 0.22);
}
.cell-main {
    width: 70px;
    height: 53px;
    flex: none;
    display: flex;
    align-items: center;
    justify-content: center;
    background: rgba(255, 255, 255, 0.18);
    border: 1px solid rgba(255, 255, 255, 0.28);
}
.zoom-cell .cell-main {
    width: 74px;
}
.ic-store {
    width: 42px !important;
    height: 42px !important;
}
.ic-pc {
    width: 40px !important;
    height: 40px !important;
}
.ic-cmd {
    width: 42px !important;
    height: 36px !important;
}
.npp-t {
    font: bold 12px "Liberation Sans", sans-serif;
    fill: #222;
}
.pc-t {
    font: bold 15px "Liberation Sans", sans-serif;
    fill: #fff;
}
.cmd-t {
    font: bold 11px "Liberation Mono", monospace;
    fill: #ddd;
}
.tray {
    margin-left: auto;
    display: flex;
    align-items: center;
    gap: 9.700px;
    padding-right: 24px;
    color: #f0e6df;
}
.tray svg {
    width: 24px;
    height: 24px;
}
.clock {
    width: 84px;
    display: flex;
    flex-direction: column;
    align-items: center;
    gap: 3px;
    margin-left: 14px;
    font-size: 15.500px;
    line-height: 21px;
}
```
